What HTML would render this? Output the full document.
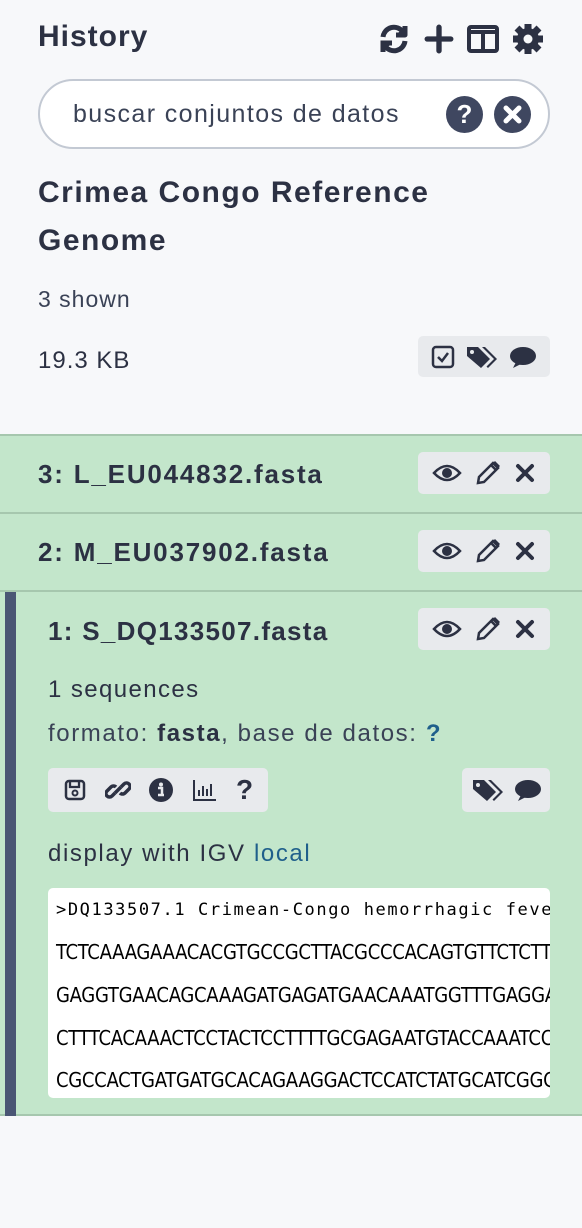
<!DOCTYPE html>
<html><head><meta charset="utf-8"><style>
*{box-sizing:border-box;margin:0;padding:0}
body{width:582px;height:1228px;background:#f7f8fa;font-family:"Liberation Sans",sans-serif;color:#2c3143;position:relative;overflow:hidden}
.a{position:absolute;white-space:nowrap}
svg{display:block}
.grp{position:absolute;background:#e8eaed;border-radius:5px;display:flex;align-items:center;justify-content:space-around;padding:0 8px}
.item{position:absolute;left:0;width:582px;background:#c3e6cb;border-top:2px solid #a6c7ae}
.ttl{position:absolute;font-weight:bold;font-size:26px;letter-spacing:1.8px;color:#2c3143;white-space:nowrap}
.seq{font-family:'DejaVu Sans Condensed','DejaVu Sans',sans-serif;font-size:20px;height:43px;letter-spacing:-0.3px}
</style></head><body>
<div class="a" style="left:38px;top:20px;font-size:30px;font-weight:bold;letter-spacing:1px">History</div>
<div class="a" style="left:377px;top:22px;display:flex;gap:13px;align-items:center">
<svg width="34" height="34" viewBox="0 0 34 34" fill="none" stroke="#2c3143" stroke-width="5"><path d="M6 15a11 11 0 0 1 20-5"/><path d="M28 19a11 11 0 0 1-20 5"/><path d="M28 4v9h-9" stroke-linejoin="round" fill="#2c3143"/><path d="M6 30v-9h9" fill="#2c3143"/></svg>
<svg width="30" height="30" viewBox="0 0 28 28" stroke="#2c3143" stroke-width="5" stroke-linecap="round"><path d="M14 3v22M3 14h22"/></svg>
<svg width="32" height="28" viewBox="0 0 32 28" fill="none" stroke="#2c3143" stroke-width="4"><rect x="2" y="2" width="28" height="24" rx="2"/><path d="M16 6v20M2 7h28" /></svg>
<svg width="32" height="32" viewBox="0 0 32 32"><g fill="#2c3143"><circle cx="16" cy="16" r="11"/><g stroke="#2c3143" stroke-width="7"><path d="M16 1v30M1 16h30M5 5l22 22M27 5L5 27"/></g></g><circle cx="16" cy="16" r="4.5" fill="#f7f8fa"/></svg>
</div>
<div class="a" style="left:38px;top:79px;width:512px;height:70px;border:2px solid #c3c9d3;border-radius:35px;background:#fff">
<div class="a" style="left:33px;top:19px;font-size:25px;letter-spacing:1.4px;color:#3a4256">buscar conjuntos de datos</div>
<div class="a" style="left:406px;top:15px;width:37px;height:37px;border-radius:50%;background:#3f4760;color:#fff;font-weight:bold;font-size:26px;text-align:center;line-height:37px">?</div>
<div class="a" style="left:454px;top:15px;width:37px;height:37px;border-radius:50%;background:#3f4760"><svg width="37" height="37"><path d="M12 12l13 13M25 12L12 25" stroke="#fff" stroke-width="5" stroke-linecap="round"/></svg></div>
</div>
<div class="a" style="left:38px;top:169px;font-size:30px;font-weight:bold;line-height:48px;letter-spacing:1.5px;white-space:normal;width:460px">Crimea Congo Reference<br>Genome</div>
<div class="a" style="left:38px;top:286px;font-size:23px;letter-spacing:1px;color:#3a4256">3 shown</div>
<div class="a" style="left:38px;top:347px;font-size:24px;letter-spacing:1px">19.3 KB</div>
<div class="grp" style="left:418px;top:336px;width:132px;height:41px">
<svg width="24" height="24"><rect x="2" y="2" width="20" height="20" rx="3" fill="none" stroke="#2c3143" stroke-width="2.5"/><path d="M7 12l4 4 6-8" fill="none" stroke="#2c3143" stroke-width="2.5"/></svg>
<svg width="34" height="26" viewBox="0 0 34 26"><path d="M2 3h11l12 12-9 9L2 12z" fill="#2c3143"/><circle cx="7" cy="8" r="2" fill="#e8eaed"/><path d="M17 3h3l12 12-9 9-1.5-1.5 7.5-7.5z" fill="#2c3143"/></svg>
<svg width="28" height="24"><ellipse cx="14" cy="11" rx="13" ry="9" fill="#2c3143"/><path d="M4 23l4-8 6 3z" fill="#2c3143"/></svg>
</div>

<div class="item" style="top:434px;height:80px">
<div class="ttl" style="left:38px;top:23px">3: L_EU044832.fasta</div>
<div class="grp" style="left:418px;top:16px;width:132px;height:42px"></div>
</div>
<div class="item" style="top:512px;height:80px">
<div class="ttl" style="left:38px;top:23px">2: M_EU037902.fasta</div>
<div class="grp" style="left:418px;top:16px;width:132px;height:42px"></div>
</div>
<div class="item" style="top:590px;height:526px;border-bottom:2px solid #a6c7ae">
<div class="a" style="left:5px;top:0;width:11px;height:524px;background:#4a5674"></div>
<div class="ttl" style="left:48px;top:24px;letter-spacing:1.3px">1: S_DQ133507.fasta</div>
<div class="grp" style="left:418px;top:16px;width:132px;height:42px"></div>
<div class="a" style="left:48px;top:84px;font-size:24px;letter-spacing:1.4px">1 sequences</div>
<div class="a" style="left:48px;top:128px;font-size:24px;letter-spacing:1.6px;color:#3a4256">formato: <b style="color:#2c3143">fasta</b>, base de datos: <b style="color:#1f5f8b">?</b></div>
<div class="grp" style="left:48px;top:176px;width:220px;height:44px;padding:0 6px">
<svg width="24" height="24"><rect x="3" y="3" width="18" height="18" rx="3" fill="none" stroke="#2c3143" stroke-width="2.5"/><path d="M7 3v6h9V3" fill="none" stroke="#2c3143" stroke-width="2.3"/><circle cx="12" cy="15" r="2.5" fill="none" stroke="#2c3143" stroke-width="2"/></svg>
<svg width="26" height="26"><g fill="none" stroke="#2c3143" stroke-width="3.5"><path d="M10 16l-3 3a3.5 3.5 0 0 1-5-5l4-4a3.5 3.5 0 0 1 5 0"/><path d="M16 10l3-3a3.5 3.5 0 0 1 5 5l-4 4a3.5 3.5 0 0 1-5 0"/><path d="M10 16l6-6"/></g></svg>
<svg width="26" height="26"><circle cx="13" cy="13" r="12" fill="#2c3143"/><circle cx="13" cy="7.5" r="2" fill="#e8eaed"/><path d="M10 11h4v7h2M10 18h6" stroke="#e8eaed" stroke-width="2.5" fill="none"/></svg>
<svg width="26" height="24"><path d="M2 2v20h22" fill="none" stroke="#2c3143" stroke-width="2"/><path d="M7 18v-6M11 18v-10M15 18v-7M19 18v-12" stroke="#2c3143" stroke-width="2"/></svg>
<span style="font-weight:bold;font-size:28px">?</span>
</div>
<div class="grp" style="left:462px;top:176px;width:88px;height:44px;padding:0 4px">
<svg width="34" height="26" viewBox="0 0 34 26"><path d="M2 3h11l12 12-9 9L2 12z" fill="#2c3143"/><circle cx="7" cy="8" r="2" fill="#e8eaed"/><path d="M17 3h3l12 12-9 9-1.5-1.5 7.5-7.5z" fill="#2c3143"/></svg>
<svg width="28" height="24"><ellipse cx="14" cy="11" rx="13" ry="9" fill="#2c3143"/><path d="M4 23l4-8 6 3z" fill="#2c3143"/></svg>
</div>
<div class="a" style="left:48px;top:248px;font-size:24px;letter-spacing:1.6px;color:#2c3143">display with IGV <span style="color:#1f5f8b">local</span></div>
<div class="a" style="left:48px;top:296px;width:502px;height:210px;background:#fff;border-radius:5px;overflow:hidden;color:#000;white-space:nowrap;padding:12px 0 0 8px">
<div style="font-family:'DejaVu Sans Mono',monospace;font-size:17px;letter-spacing:1.6px;height:40px">&gt;DQ133507.1 Crimean-Congo hemorrhagic fever</div>
<div class="seq">TCTCAAAGAAACACGTGCCGCTTACGCCCACAGTGTTCTCTTT</div>
<div class="seq">GAGGTGAACAGCAAAGATGAGATGAACAAATGGTTTGAGGACC</div>
<div class="seq" style="height:42px">CTTTCACAAACTCCTACTCCTTTTGCGAGAATGTACCAAATCC</div>
<div class="seq">CGCCACTGATGATGCACAGAAGGACTCCATCTATGCATCGGCC</div>
</div>
</div>
<script>
var ic='<svg width="30" height="22"><path d="M2 11Q15-3 28 11Q15 25 2 11z" fill="none" stroke="#2c3143" stroke-width="2.5"/><circle cx="15" cy="11" r="5" fill="#2c3143"/></svg><svg width="28" height="28"><path d="M4 24l1-6L19 4l5 5-14 14z" fill="none" stroke="#2c3143" stroke-width="2.5"/><path d="M17 6l5 5" stroke="#2c3143" stroke-width="2.5"/><path d="M19 4l2-2 5 5-2 2z" fill="#2c3143"/></svg><svg width="22" height="22"><path d="M4 4l14 14M18 4L4 18" stroke="#2c3143" stroke-width="4" stroke-linecap="round"/></svg>';
document.querySelectorAll('.item > .grp').forEach(function(g){if(g.style.width=='132px')g.innerHTML=ic;});
</script>
</body></html>
